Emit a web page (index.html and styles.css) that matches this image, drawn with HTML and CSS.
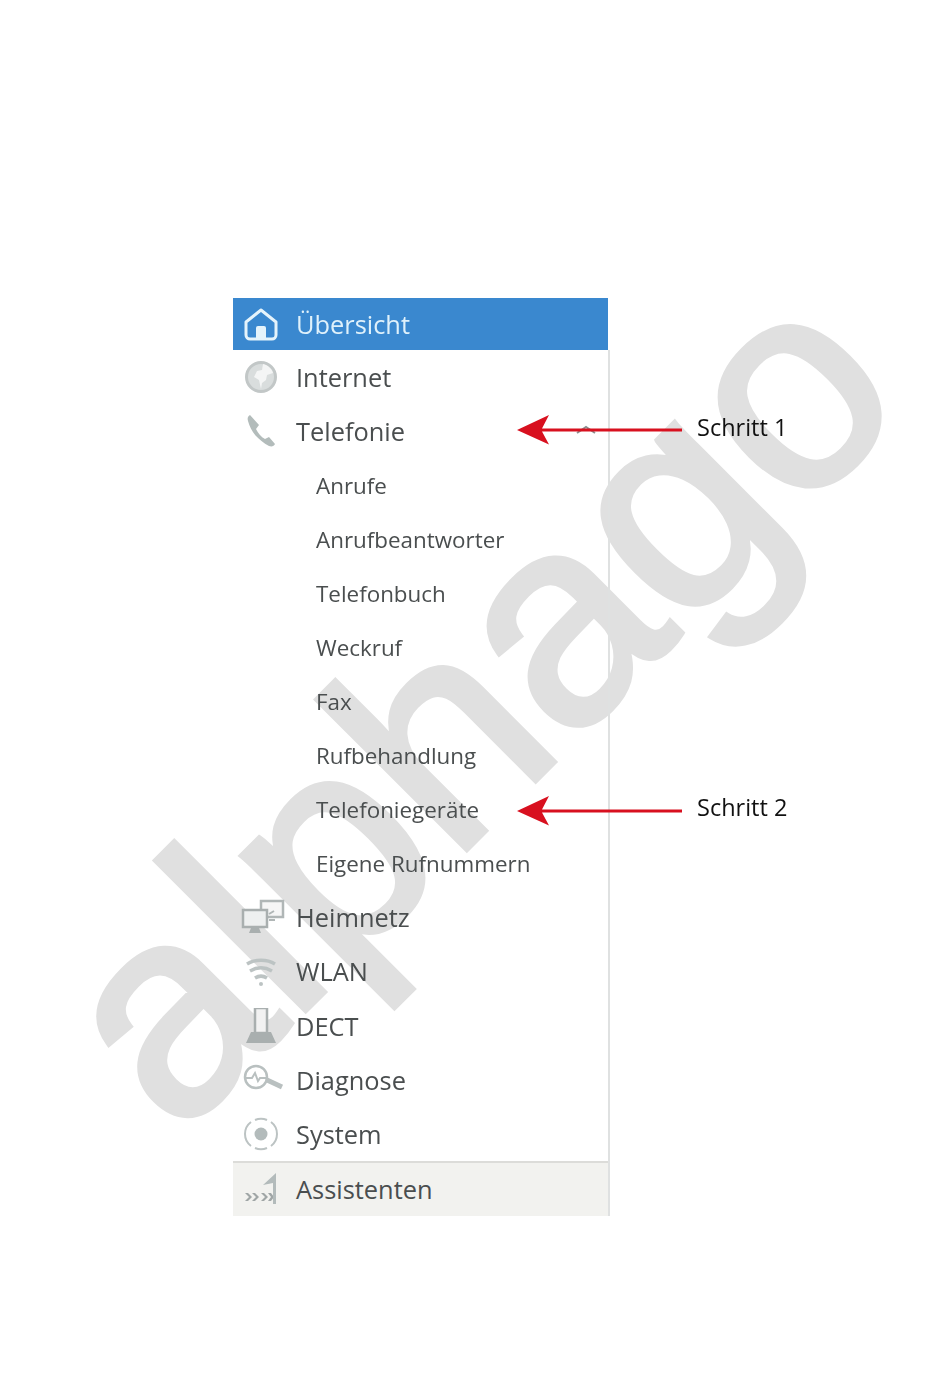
FILE: index.html
```html
<!DOCTYPE html>
<html lang="de">
  <head>
    <meta charset="UTF-8" />
    <meta name="viewport" content="width=device-width, initial-scale=1.0" />
    <title>Telefonie Menü</title>
    <link rel="stylesheet" href="styles.css">
  </head>
  <body>
    <div class="watermark">alphago</div>

    <nav class="menu">
      <a class="menu-row active" href="#">
        <svg class="icon" viewBox="0 0 36 36"><path d="M3 16 18 4l15 12v13a4 4 0 0 1-4 4H7a4 4 0 0 1-4-4z" fill="none" stroke="#e4f3fb" stroke-width="3" stroke-linejoin="round"/><path d="M13 32V22a2 2 0 0 1 2-2h6a2 2 0 0 1 2 2v10z" fill="#e4f3fb"/></svg>
        <span>Übersicht</span>
      </a>
      <a class="menu-row" href="#">
        <svg class="icon" viewBox="0 0 36 36"><circle cx="18" cy="18" r="14.5" fill="#d9dddd" stroke="#c2c7c7" stroke-width="3"/><path d="M20 5c5 1 9 5 10 9l-6 2-1 5-4 3-1 6-2-9-5-3 3-6 5-1z" fill="#f4f5f5"/></svg>
        <span>Internet</span>
      </a>
      <a class="menu-row" href="#">
        <svg class="icon" viewBox="0 0 36 36"><path d="M7 2C5 3 4 5 5 8c3 11 10 19 21 25 3 1 5 0 6-2l-6-7-4 2c-4-2-7-6-9-10l3-4z" fill="#b3bcbb"/></svg>
        <span>Telefonie</span>
      </a>
      <a class="menu-row sub" href="#"><span>Anrufe</span></a>
      <a class="menu-row sub" href="#"><span>Anrufbeantworter</span></a>
      <a class="menu-row sub" href="#"><span>Telefonbuch</span></a>
      <a class="menu-row sub" href="#"><span>Weckruf</span></a>
      <a class="menu-row sub" href="#"><span>Fax</span></a>
      <a class="menu-row sub" href="#"><span>Rufbehandlung</span></a>
      <a class="menu-row sub" href="#"><span>Telefoniegeräte</span></a>
      <a class="menu-row sub" href="#"><span>Eigene Rufnummern</span></a>
      <a class="menu-row lower" href="#">
        <svg class="icon icon-wide" viewBox="0 0 44 36"><rect x="20" y="2" width="22" height="16" fill="#f6f6f6" stroke="#b0b6b6" stroke-width="2.500"/><rect x="2" y="11" width="24" height="17" fill="#eef0f0" stroke="#a9afaf" stroke-width="2.500"/><path d="M10 29h8l2 5H8z" fill="#a9afaf"/><path d="M28 21h6M33 12l-5 3" stroke="#b0b6b6" stroke-width="2"/></svg>
        <span>Heimnetz</span>
      </a>
      <a class="menu-row lower" href="#">
        <svg class="icon" viewBox="0 0 36 36"><path d="M4 11c8-5 20-5 28 0M7 18c7-4 15-4 22 0M12 25c4-2.500 8-2.500 12 0" fill="none" stroke="#bcc3c3" stroke-width="3.500"/><circle cx="18" cy="31" r="2" fill="#bcc3c3"/></svg>
        <span>WLAN</span>
      </a>
      <a class="menu-row lower" href="#">
        <svg class="icon" viewBox="0 0 36 36"><rect x="12" y="0" width="12" height="25" fill="#f2f2f2" stroke="#a9afaf" stroke-width="2.500"/><path d="M8 24h20l5 11H3z" fill="#a9afaf"/></svg>
        <span>DECT</span>
      </a>
      <a class="menu-row lower" href="#">
        <svg class="icon icon-wide" viewBox="0 0 44 36"><circle cx="15" cy="15" r="11" fill="none" stroke="#b9c0c0" stroke-width="2.500"/><path d="M5 16h6l3-5 3 8 2-3h6" fill="none" stroke="#b9c0c0" stroke-width="2"/><path d="M26 18l15 7" stroke="#b9c0c0" stroke-width="5"/></svg>
        <span>Diagnose</span>
      </a>
      <a class="menu-row lower" href="#">
        <svg class="icon" viewBox="0 0 36 36"><circle cx="18" cy="18" r="6.500" fill="#b3bbbb"/><path d="M8 6a15 15 0 0 0 0 24M28 6a15 15 0 0 1 0 24M12 4a15 15 0 0 1 12 0M12 32a15 15 0 0 0 12 0" fill="none" stroke="#bcc3c3" stroke-width="2"/></svg>
        <span>System</span>
      </a>
      <a class="menu-row assist" href="#">
        <svg class="icon" viewBox="0 0 36 36"><path d="M2 21h3l4 4-4 4H2l4-4zM9 21h3l4 4-4 4H9l4-4zM18 21h3l4 4-4 4h-3l4-4zM25 21h3l3 4-3 4h-3l3-4z" fill="#a0a6a6"/><path d="M33 1v31h-3V11l-10 2z" fill="#b3bbbb"/></svg>
        <span>Assistenten</span>
      </a>
    </nav>

    <!-- chevron and the red arrows sit on top of the menu -->
    <svg class="chevron" viewBox="0 0 22 10"><path d="M2 8l9-6 9 6" fill="none" stroke="#8a8f8f" stroke-width="2"/></svg>

    <div class="note note-1">
      <svg class="arrow" viewBox="0 0 166 36"><path d="M0 18 32 3 25 16.500h140v3H25l7 13z" fill="#d8101f"/></svg>
      <span>Schritt 1</span>
    </div>
    <div class="note note-2">
      <svg class="arrow" viewBox="0 0 166 36"><path d="M0 18 32 3 25 16.500h140v3H25l7 13z" fill="#d8101f"/></svg>
      <span>Schritt 2</span>
    </div>
  </body>
</html>
```

FILE: styles.css
```css
html {
  background-color: #ffffff;
}

body {
  font-family: "Open Sans", "Liberation Sans", sans-serif;
  margin: 0;
  padding: 298px 0 0 233px;
  height: 1397px;
  box-sizing: border-box;
  position: relative;
  overflow: hidden;
}

/* Watermark */
.watermark {
  position: absolute;
  left: 473px;
  top: 700px;
  font-family: "Liberation Sans", sans-serif;
  font-size: 292px;
  line-height: 0.5;
  color: #e0e0e0;
  -webkit-text-stroke: 6px #e0e0e0;
  white-space: nowrap;
  transform: translate(-50%, -50%) rotate(-45deg);
}

/* Menu */
.menu {
  position: relative;
  width: 377px;
  border-right: 2px solid #dfe1e1;
  box-sizing: border-box;
  filter: blur(0.4px);
}

.menu-row {
  display: flex;
  align-items: center;
  height: 54px;
  padding-left: 63px;
  position: relative;
  color: #4a4e4f;
  font-size: 25.4px;
  text-decoration: none;
}

.icon {
  position: absolute;
  left: 10px;
  top: 50%;
  width: 36px;
  height: 36px;
  transform: translateY(-50%);
}

.icon-wide {
  left: 8px;
  width: 44px;
}

.active {
  background-color: #3a88cf;
  color: #dff1fb;
  height: 52px;
  box-shadow: 2px 0 0 #ffffff;
}

.sub {
  padding-left: 83px;
  font-size: 22.4px;
}

.lower {
  height: 54.3px;
}

.assist {
  background-color: #f2f2ef;
  border-top: 2px solid #dcdcd9;
  box-sizing: border-box;
  height: 55px;
  padding-bottom: 2px;
}

/* Annotations */
.chevron {
  position: absolute;
  left: 575px;
  top: 425px;
  width: 22px;
  height: 10px;
}

.note {
  position: absolute;
  left: 517px;
  display: flex;
  align-items: center;
  gap: 14px;
  font-size: 23.500px;
  color: #111111;
}

.note-1 {
  top: 405px;
}

.note-2 {
  top: 785.5px;
}

.arrow {
  width: 166px;
  height: 36px;
  margin-top: 7px;
}
```
